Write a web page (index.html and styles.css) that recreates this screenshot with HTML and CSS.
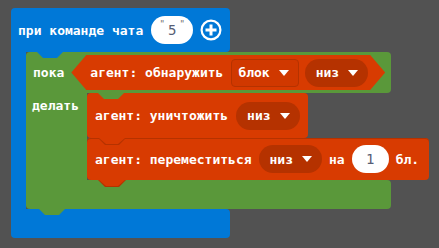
FILE: index.html
```html
<!DOCTYPE html>
<html lang="ru">
<head>
    <meta charset="UTF-8">
    <meta name="viewport" content="width=device-width, initial-scale=1.0">
    <title>Агент</title>
    <link rel="stylesheet" href="styles.css">
</head>
<body>
    <div class="hat">
        <div class="hat-top">
            <span>при команде чата</span>
            <span class="str"><span class="q">"</span>5<span class="q">"</span></span>
            <svg class="plus" width="22" height="22" viewBox="0 0 22 22">
                <circle cx="11" cy="11" r="9.4" fill="none" stroke="#fff" stroke-width="2.2"/>
                <path d="M11 5.5V16.5M5.5 11H16.5" stroke="#fff" stroke-width="3"/>
            </svg>
        </div>
        <div class="hat-mid">
            <div class="hat-arm"></div>
            <div class="loop">
                <div class="loop-top">
                    <span>пока</span>
                    <div class="cond">
                        <span>агент: обнаружить</span>
                        <span class="dd-box">блок <i class="caret"></i></span>
                        <span class="dd">низ <i class="caret"></i></span>
                    </div>
                </div>
                <div class="loop-mid">
                    <div class="loop-arm">делать</div>
                    <div class="stack">
                        <div class="stmt first">
                            <span>агент: уничтожить</span>
                            <span class="dd">низ <i class="caret"></i></span>
                        </div>
                        <div class="stmt">
                            <span>агент: переместиться</span>
                            <span class="dd">низ <i class="caret"></i></span>
                            <span>на</span>
                            <span class="num">1</span>
                            <span>бл.</span>
                        </div>
                    </div>
                </div>
                <div class="loop-bottom"></div>
            </div>
        </div>
        <div class="hat-bottom"></div>
    </div>
</body>
</html>
```

FILE: styles.css
```css
body {
    margin: 0;
    padding: 8px 0 0 11px;
    height: 248px;
    box-sizing: border-box;
    overflow: hidden;
    background-color: #525252;
    font-family: "DejaVu Sans Mono", "Liberation Mono", monospace;
    font-weight: bold;
    font-size: 13px;
    color: #fff;
}

/* hat block (blue) */
.hat {
    display: flex;
    flex-direction: column;
    align-items: flex-start;
}
.hat-top {
    position: relative;
    display: flex;
    align-items: center;
    gap: 8px;
    width: 219px;
    height: 44px;
    box-sizing: border-box;
    padding-left: 7px;
    background-color: #0078d7;
    border-radius: 4px 4px 4px 0;
}
.hat-top::after {
    content: "";
    position: absolute;
    z-index: 1;
    left: 26px;
    top: 100%;
    width: 26px;
    height: 6px;
    background-color: #0078d7;
    clip-path: polygon(0 0, 100% 0, 20px 100%, 6px 100%);
}
.hat-mid {
    display: flex;
}
.hat-arm {
    width: 15px;
    background-color: #0078d7;
}
.hat-bottom {
    width: 219px;
    height: 29px;
    background-color: #0078d7;
    border-radius: 0 4px 4px 4px;
}

/* string / number inputs */
.str, .num {
    display: flex;
    align-items: center;
    justify-content: center;
    height: 28px;
    border-radius: 14px;
    background-color: #fff;
    color: #575e75;
    font-weight: normal;
    font-size: 14px;
}
.str {
    width: 42px;
    gap: 3px;
}
.str .q {
    align-self: flex-start;
    margin-top: 3px;
    font-size: 9px;
    color: #6b6b6b;
}
.num {
    width: 37px;
}
.plus {
    margin-left: -1px;
}

/* while loop (green) */
.loop {
    display: flex;
    flex-direction: column;
    align-items: flex-start;
}
.loop-top {
    position: relative;
    display: flex;
    align-items: center;
    gap: 7px;
    width: 365px;
    height: 41px;
    box-sizing: border-box;
    padding-left: 7px;
    background-color: #5a983a;
    border-radius: 4px 4px 4px 0;
}
.loop-top::after {
    content: "";
    position: absolute;
    z-index: 1;
    left: 72px;
    top: 100%;
    width: 26px;
    height: 6px;
    background-color: #5a983a;
    clip-path: polygon(0 0, 100% 0, 20px 100%, 6px 100%);
}
.loop-mid {
    display: flex;
}
.loop-arm {
    width: 61px;
    box-sizing: border-box;
    padding: 5px 0 0 6px;
    background-color: #5a983a;
}
.loop-bottom {
    position: relative;
    width: 365px;
    height: 29px;
    background-color: #5a983a;
    border-radius: 0 4px 4px 4px;
}
.loop-bottom::after {
    content: "";
    position: absolute;
    left: 13px;
    top: 100%;
    width: 26px;
    height: 6px;
    background-color: #5a983a;
    clip-path: polygon(0 0, 100% 0, 20px 100%, 6px 100%);
}

/* boolean hexagon */
.cond {
    display: flex;
    align-items: center;
    height: 35px;
    padding: 0 17px 0 19px;
    background-color: #d83b01;
    clip-path: polygon(15px 0, calc(100% - 15px) 0, 100% 50%, calc(100% - 15px) 100%, 15px 100%, 0 50%);
}
.cond .dd-box {
    margin-left: 8px;
}
.cond .dd {
    margin-left: 6px;
}

/* dropdowns */
.dd-box, .dd {
    display: flex;
    align-items: center;
    gap: 9px;
    height: 28px;
    box-sizing: border-box;
}
.dd-box {
    padding: 0 9px 0 6px;
    border: 1px solid #b53200;
    border-radius: 4px;
    background-color: #d03800;
}
.dd {
    padding: 0 10px 0 11px;
    border-radius: 14px;
    background-color: #b53200;
}
.caret {
    width: 0;
    height: 0;
    border-left: 5px solid transparent;
    border-right: 5px solid transparent;
    border-top: 6px solid #fff;
}

/* agent statements (red) */
.stack {
    display: flex;
    flex-direction: column;
    align-items: flex-start;
}
.stmt {
    position: relative;
    display: flex;
    align-items: center;
    gap: 7px;
    height: 42px;
    padding: 0 10px 0 8px;
    background-color: #d83b01;
    border-radius: 4px;
}
.stmt.first {
    height: 45px;
    gap: 8px;
    padding-right: 8px;
}
.stmt + .stmt {
    box-shadow: inset 0 1px 0 #b53200;
}
.stmt::before, .stmt::after {
    content: "";
    position: absolute;
    z-index: 1;
    top: 100%;
    clip-path: polygon(0 0, 100% 0, calc(100% - 7px) 100%, 7px 100%);
}
.stmt::before {
    left: 11px;
    width: 28px;
    height: 7px;
    background-color: #b53200;
}
.stmt::after {
    left: 12px;
    width: 26px;
    height: 6px;
    background-color: #d83b01;
}
```
